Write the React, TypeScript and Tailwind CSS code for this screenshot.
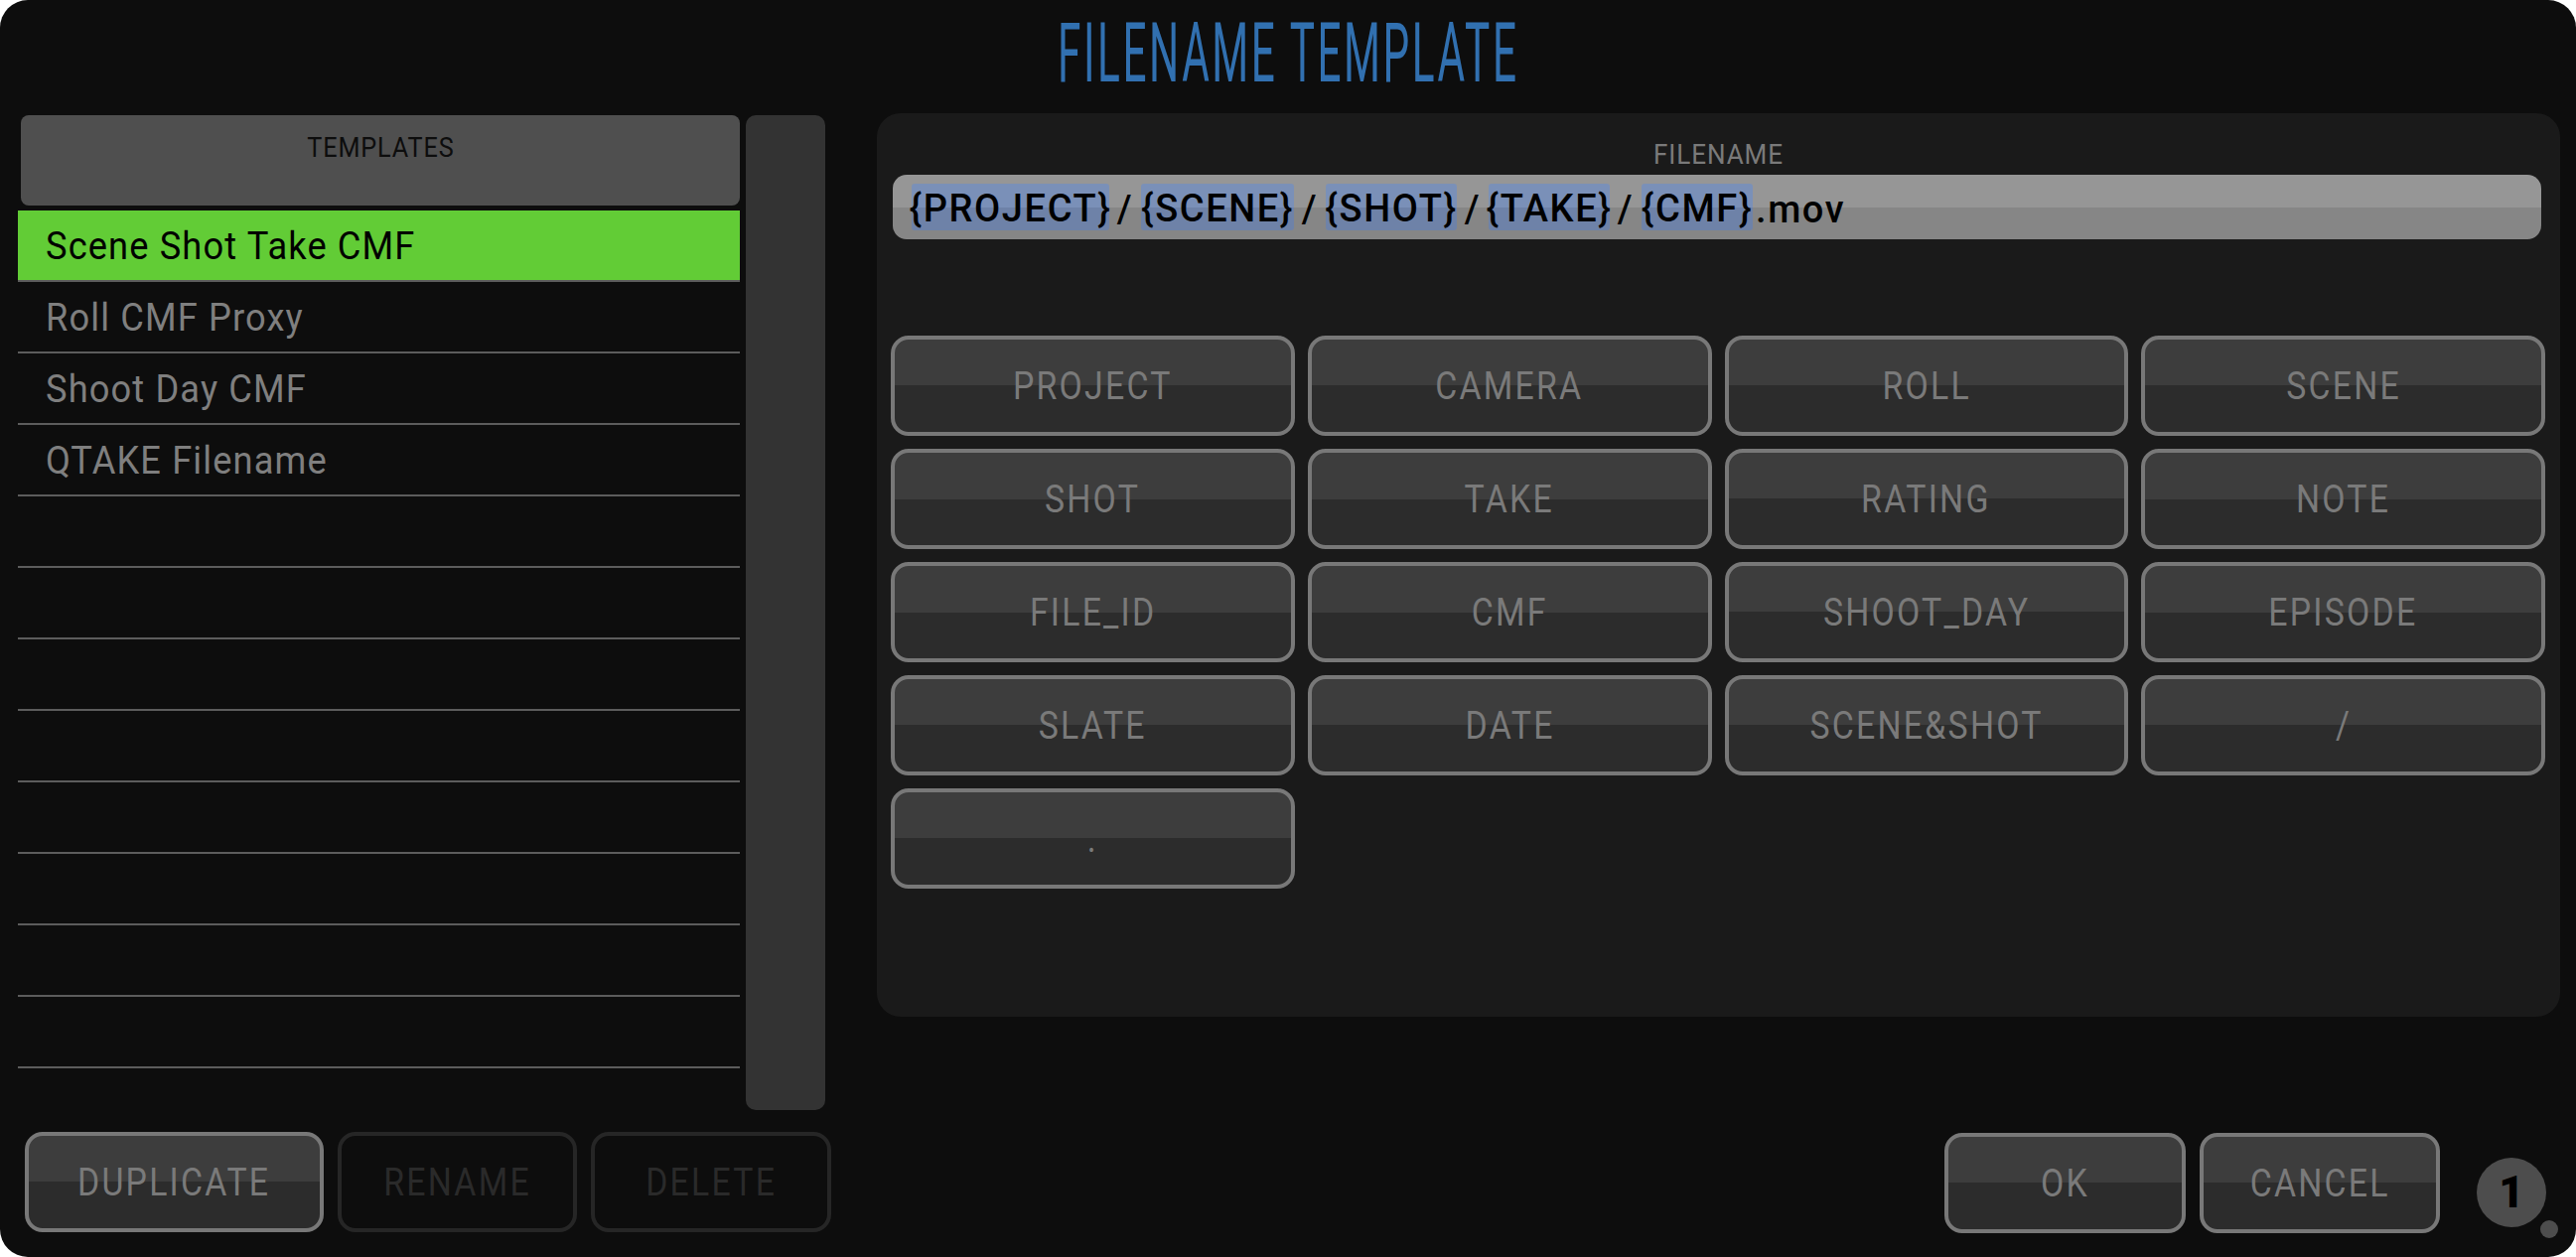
import clsx from 'clsx';

const TEMPLATES = ['Scene Shot Take CMF', 'Roll CMF Proxy', 'Shoot Day CMF', 'QTAKE Filename', '', '', '', '', '', '', '', ''];

const TOKENS = [
  'PROJECT', 'CAMERA', 'ROLL', 'SCENE',
  'SHOT', 'TAKE', 'RATING', 'NOTE',
  'FILE_ID', 'CMF', 'SHOOT_DAY', 'EPISODE',
  'SLATE', 'DATE', 'SCENE&SHOT', '/',
  '.',
];

const PARTS = [
  { text: '{PROJECT}', w: 'w-[199px]' },
  { text: '{SCENE}', w: 'w-[154px]' },
  { text: '{SHOT}', w: 'w-[132px]' },
  { text: '{TAKE}', w: 'w-[122px]' },
  { text: '{CMF}', w: 'w-[112px]' },
];

// Botón con brillo partido: mitad superior más clara, borde gris redondeado.
function GlossButton({ label, width, disabled }: { label: string; width?: string; disabled?: boolean }) {
  return (
    <button
      type="button"
      className={clsx(
        'flex h-[101px] shrink-0 items-center justify-center rounded-[18px] border-4 pt-[2px] text-[38px] tracking-[2.5px]',
        width,
        disabled
          ? 'border-[#262626] bg-transparent text-[#2a2a2a]'
          : 'border-[#787878] bg-[linear-gradient(#3d3d3d_50%,#2c2c2c_50%)] text-[#7a7a7a]',
      )}
    >
      <span className="inline-block scale-x-[.89] whitespace-nowrap">{label}</span>
    </button>
  );
}

export default function App() {
  return (
    <div className="h-[1266px] w-[2594px] bg-white font-[family-name:Roboto,sans-serif]">
      <div className="flex h-full flex-col rounded-[28px] bg-[#0d0d0d]">
        <div className="flex h-[114px] shrink-0 items-start justify-center pt-[5px]">
          <h1 className="scale-x-[.51] text-[83px] leading-[97px] font-normal tracking-[5px] whitespace-nowrap text-[#3170b0]">
            FILENAME TEMPLATE
          </h1>
        </div>

        <div className="flex min-h-0 flex-1">
          {/* Columna izquierda: lista de plantillas */}
          <div className="flex w-[831px] shrink-0 flex-col pt-[2px] pl-[18px]">
            <div className="flex h-[1002px] gap-[6px]">
              <div className="w-[727px]">
                <div className="ml-[3px] flex h-[91px] justify-center rounded-[8px] bg-[#4f4f4f] pt-[17px] text-[28px] leading-[32px] tracking-[1px] text-[#0d0d0d]">
                  <span className="inline-block scale-x-[.9]">TEMPLATES</span>
                </div>
                <ul className="mt-[5px]">
                  {TEMPLATES.map((name, i) => (
                    <li
                      key={i}
                      className={clsx(
                        'flex h-[72px] items-center border-b-2 border-[#5c5c5c] pt-[2px] pl-[28px] text-[39px] tracking-[1.2px]',
                        i === 0 ? 'bg-[#62cc36] text-black' : 'text-[#7f7f7f]',
                      )}
                    >
                      <span className="inline-block origin-left scale-x-[.93] whitespace-nowrap">{name}</span>
                    </li>
                  ))}
                </ul>
              </div>
              <div className="w-[80px] rounded-[10px] bg-[#333333]" />
            </div>
            <div className="mt-[22px] flex gap-[14px] pl-[7px]">
              <GlossButton label="DUPLICATE" width="w-[301px]" />
              <GlossButton label="RENAME" width="w-[241px]" disabled />
              <GlossButton label="DELETE" width="w-[242px]" disabled />
            </div>
          </div>

          {/* Columna derecha: nombre de archivo y tokens */}
          <div className="ml-[52px] flex w-[1695px] shrink-0 flex-col">
            <div className="h-[910px] rounded-[24px] bg-[#1a1a1a] pt-[26px] pr-[15px] pl-[14px]">
              <div className="text-center text-[28px] leading-[32px] tracking-[1px] text-[#7a7a7a]">
                <span className="inline-block scale-x-[.93]">FILENAME</span>
              </div>
              <div className="mt-[4px] ml-[2px] flex h-[65px] w-[1660px] items-center rounded-[14px] bg-[linear-gradient(#969696_50%,#868686_50%)] pl-[19px] text-[38px] font-medium tracking-[1.6px] text-black">
                {PARTS.map((p, i) => (
                  <div key={p.text} className="flex items-center">
                    <span
                      className={clsx(
                        'flex h-[47px] items-center justify-center rounded-[3px] bg-[linear-gradient(#7a90b8_51%,#6e82a8_51%)] pt-[3px] whitespace-nowrap',
                        p.w,
                      )}
                    >
                      {p.text}
                    </span>
                    {i < PARTS.length - 1 && <span className="w-[32px] pt-[5px] text-center">/</span>}
                  </div>
                ))}
                <span className="ml-[3px] pt-[6px]">.mov</span>
              </div>
              <div className="mt-[97px] grid grid-cols-4 gap-x-[13px] gap-y-[13px]">
                {TOKENS.map((t) => (
                  <GlossButton key={t} label={t} />
                ))}
              </div>
            </div>
            <div className="mt-[117px] flex justify-end pr-[14px]">
              <GlossButton label="OK" width="w-[243px]" />
              <div className="ml-[14px]">
                <GlossButton label="CANCEL" width="w-[242px]" />
              </div>
              <div className="relative mt-[25px] ml-[37px] flex h-[70px] w-[70px] items-center justify-center rounded-full bg-[#4d4d4d] text-[44px] leading-none font-black text-black">
                1
                <span className="absolute top-[63px] left-[64px] h-[18px] w-[18px] rounded-full bg-[#4d4d4d]" />
              </div>
            </div>
          </div>
        </div>
      </div>
    </div>
  );
}
